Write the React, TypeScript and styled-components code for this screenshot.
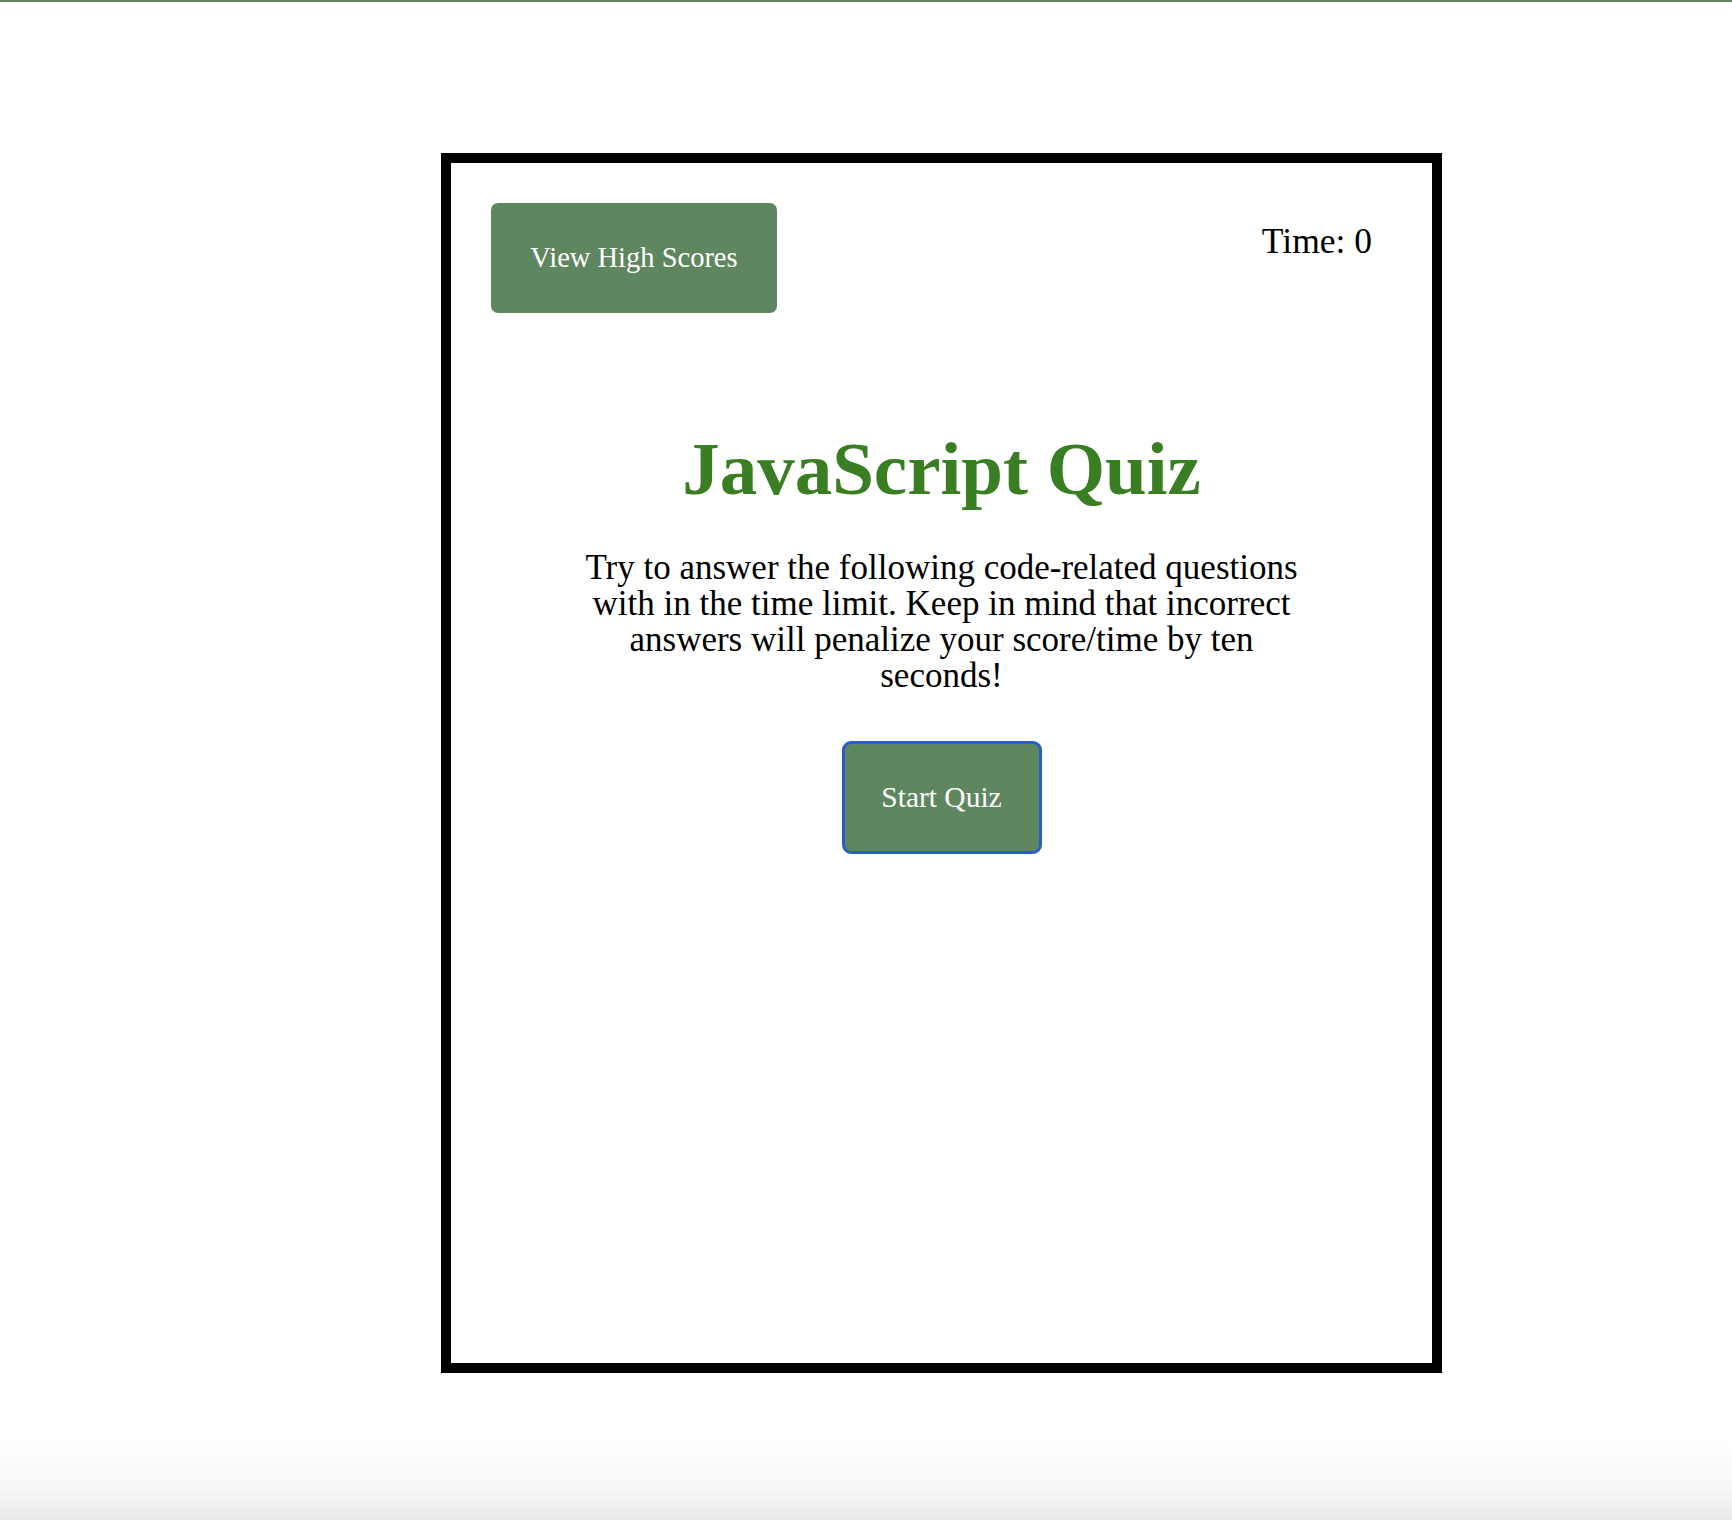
import React from "react";
import styled, { createGlobalStyle } from "styled-components";

const GlobalStyle = createGlobalStyle`
  html, body {
    margin: 0;
    padding: 0;
  }
  html {
    min-height: 1520px;
    background: linear-gradient(to bottom, #ffffff 0px, #ffffff 1440px, #f6f6f6 1490px, #e9e9e9 1520px);
  }
  body {
    border-top: 2px solid #5e855e;
    font-family: "Liberation Serif", "Times New Roman", serif;
    color: #000;
  }
`;

const Page = styled.main`
  display: flex;
  padding: 151px 0 0 441px;
`;

const Card = styled.section`
  box-sizing: border-box;
  width: 1001px;
  height: 1220px;
  border: 10px solid #000;
  background: #fff;
  display: flex;
  flex-direction: column;
  align-items: center;
`;

const Header = styled.header`
  align-self: stretch;
  display: flex;
  justify-content: space-between;
  align-items: flex-start;
  padding: 40px 60px 0 40px;
`;

const Button = styled.button<{ $focused?: boolean; $size: number }>`
  box-sizing: border-box;
  display: flex;
  align-items: center;
  justify-content: center;
  background: #5e865f;
  color: #fff;
  font-family: "Liberation Serif", "Times New Roman", serif;
  font-size: ${(p) => p.$size}px;
  line-height: 1;
  border-radius: ${(p) => (p.$focused ? 9 : 7)}px;
  border: ${(p) => (p.$focused ? "3px solid #2a5dcc" : "none")};
  cursor: pointer;
  padding: 0;
`;

const HighScores = styled(Button)`
  width: 286px;
  height: 110px;
`;

const StartButton = styled(Button)`
  width: 200px;
  height: 113px;
  margin-top: 47px;
`;

const Timer = styled.div`
  font-size: 35.5px;
  line-height: 1;
  margin-top: 21px;
`;

const Title = styled.h1`
  margin: 118px 0 0;
  font-size: 75px;
  line-height: 1;
  font-weight: 700;
  color: #3a7e24;
  text-align: center;
`;

const Intro = styled.p`
  margin: 44px 0 0;
  font-size: 35px;
  line-height: 36px;
  text-align: center;
`;

export default function App() {
  return (
    <>
      <GlobalStyle />
      <Page>
        <Card>
          <Header>
            <HighScores $size={28.5}>View High Scores</HighScores>
            <Timer>Time: 0</Timer>
          </Header>
          <Title>JavaScript Quiz</Title>
          <Intro>
            Try to answer the following code-related questions
            <br />
            with in the time limit. Keep in mind that incorrect
            <br />
            answers will penalize your score/time by ten
            <br />
            seconds!
          </Intro>
          <StartButton $focused $size={29.5}>
            Start Quiz
          </StartButton>
        </Card>
      </Page>
    </>
  );
}
